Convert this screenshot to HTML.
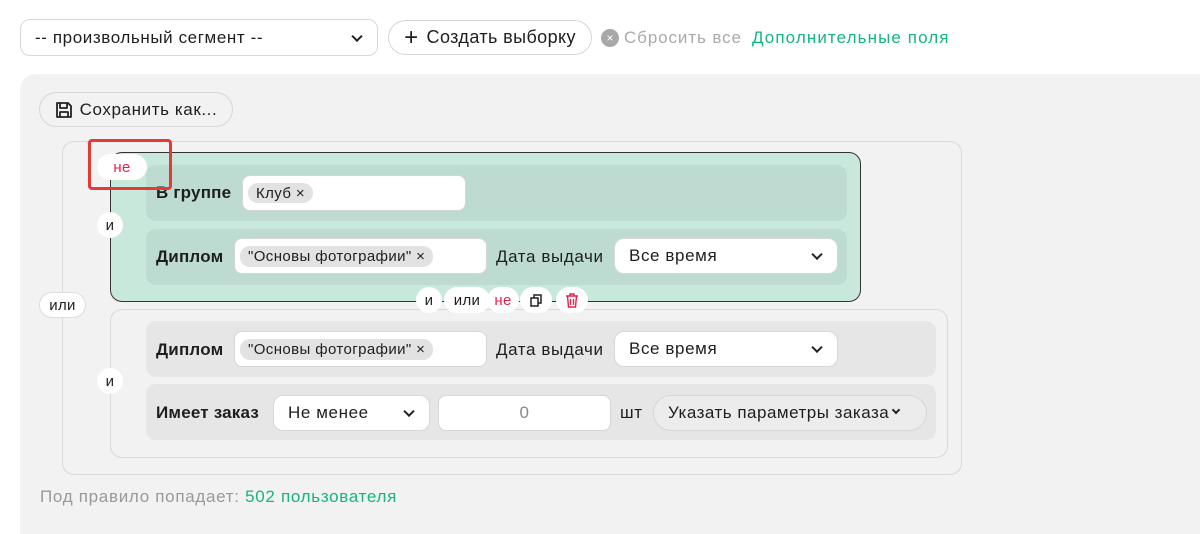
<!DOCTYPE html><html><head><meta charset="utf-8"><style>
*{box-sizing:border-box;margin:0;padding:0}
body{width:1200px;height:520px;background:#fff;font-family:"Liberation Sans",sans-serif;color:#1e1e1e;position:relative;overflow:hidden;font-size:17px;letter-spacing:.6px}
.a{position:absolute;white-space:nowrap}
.sel{background:#fff;border:1px solid #d8d8d8;border-radius:10px;display:flex;align-items:center;padding-left:14px}
.chev{position:absolute;right:16px;top:50%;width:8px;height:8px;border-right:2px solid #222;border-bottom:2px solid #222;transform:translateY(-70%) rotate(45deg)}
.pill{background:#fff;border:1px solid #d6d6d6;border-radius:20px;display:flex;align-items:center;justify-content:center}
.row{border-radius:10px}
.lbl{font-weight:bold;font-size:17px;letter-spacing:.2px}
.inp{background:#fff;border:1px solid #d6d6d6;border-radius:8px}
.chip{background:#e2e2e2;border-radius:10px;font-size:15px;display:flex;align-items:center;padding:0 8px;letter-spacing:.4px}
.sm{background:#fff;border-radius:14px;display:flex;align-items:center;justify-content:center;font-size:15px;letter-spacing:.3px}
</style></head><body>
<div class="a sel" style="left:20px;top:19px;width:358px;height:37px">-- произвольный сегмент --<span class="chev"></span></div>
<div class="a pill" style="left:388px;top:20px;width:204px;height:35px;font-size:18px;letter-spacing:.4px"><span style="font-size:24px;margin-right:8px;line-height:1">+</span>Создать выборку</div>
<div class="a" style="left:601px;top:29px;width:18px;height:18px;border-radius:50%;background:#a8a8a8;color:#fff;font-size:12px;text-align:center;line-height:18px;letter-spacing:0">×</div>
<div class="a" style="left:624px;top:28px;color:#aaa;font-size:17px;letter-spacing:.9px">Сбросить все</div>
<div class="a" style="left:752px;top:28px;color:#14b57f;font-size:17px;letter-spacing:1.1px">Дополнительные поля</div>
<div class="a" style="left:20px;top:74px;width:1200px;height:460px;background:#f2f2f2;border-radius:16px 0 0 0"></div>
<div class="a pill" style="left:39px;top:92px;width:194px;height:35px;background:#f2f2f2;font-size:17px"><svg width="18" height="18" viewBox="0 0 18 18" style="margin-right:7px"><path d="M2 2h11l3 3v11H2z M5 2v5h7V2 M5 16v-5h8v5" fill="none" stroke="#222" stroke-width="1.8" stroke-linejoin="round"/></svg>Сохранить как...</div>
<div class="a" style="left:62px;top:141px;width:900px;height:334px;border:1px solid #d9d9d9;border-radius:12px"></div>
<div class="a" style="left:110px;top:152px;width:751px;height:150px;background:#c8e8dc;border:1.5px solid #333;border-radius:12px"></div>
<div class="a row" style="left:146px;top:165px;width:701px;height:56px;background:#bddbd0"></div>
<div class="a lbl" style="left:156px;top:183px">В группе</div>
<div class="a inp" style="left:242px;top:175px;width:224px;height:36px"></div>
<div class="a chip" style="left:248px;top:183px;height:20px">Клуб ×</div>
<div class="a row" style="left:146px;top:229px;width:701px;height:56px;background:#bddbd0"></div>
<div class="a lbl" style="left:156px;top:247px">Диплом</div>
<div class="a inp" style="left:234px;top:238px;width:253px;height:36px"></div>
<div class="a chip" style="left:240px;top:246px;height:21px">"Основы фотографии" ×</div>
<div class="a" style="left:496px;top:247px">Дата выдачи</div>
<div class="a sel" style="left:614px;top:238px;width:224px;height:36px">Все время<span class="chev"></span></div>
<div class="a" style="left:110px;top:309px;width:838px;height:149px;border:1px solid #d9d9d9;border-radius:12px"></div>
<div class="a row" style="left:146px;top:321px;width:790px;height:56px;background:#e6e6e6"></div>
<div class="a lbl" style="left:156px;top:340px">Диплом</div>
<div class="a inp" style="left:234px;top:331px;width:253px;height:36px"></div>
<div class="a chip" style="left:240px;top:339px;height:21px">"Основы фотографии" ×</div>
<div class="a" style="left:496px;top:340px">Дата выдачи</div>
<div class="a sel" style="left:614px;top:331px;width:224px;height:36px">Все время<span class="chev"></span></div>
<div class="a row" style="left:146px;top:384px;width:790px;height:56px;background:#e6e6e6"></div>
<div class="a lbl" style="left:156px;top:403px">Имеет заказ</div>
<div class="a sel" style="left:273px;top:395px;width:157px;height:36px">Не менее<span class="chev"></span></div>
<div class="a inp" style="left:438px;top:395px;width:173px;height:36px;text-align:center;line-height:34px;color:#888">0</div>
<div class="a" style="left:620px;top:403px">шт</div>
<div class="a pill" style="left:653px;top:395px;width:274px;height:36px;background:#ececec;justify-content:flex-start;padding-left:14px;letter-spacing:.5px">Указать параметры заказа<span style="margin-left:4px;width:6px;height:6px;border-right:2px solid #222;border-bottom:2px solid #222;transform:translateY(-3px) rotate(45deg)"></span></div>
<div class="a sm" style="left:97px;top:154px;width:50px;height:26px;color:#e8204e">не</div>
<div class="a sm" style="left:97px;top:212px;width:26px;height:26px">и</div>
<div class="a sm" style="left:97px;top:368px;width:26px;height:26px">и</div>
<div class="a sm" style="left:39px;top:292px;width:47px;height:26px;border:1px solid #ddd">или</div>
<div class="a sm" style="left:416px;top:287px;width:26px;height:26px">и</div>
<div class="a sm" style="left:444px;top:287px;width:46px;height:26px">или</div>
<div class="a sm" style="left:487px;top:287px;width:32px;height:26px;color:#e8204e">не</div>
<div class="a sm" style="left:520px;top:287px;width:32px;height:26px"><svg width="14" height="14" viewBox="0 0 14 14"><path d="M2 5h7v8H2z M5 5V2h7v8H9" fill="none" stroke="#222" stroke-width="1.5"/></svg></div>
<div class="a sm" style="left:556px;top:287px;width:32px;height:26px"><svg width="14" height="15" viewBox="0 0 14 15"><path d="M1 3h12 M5 3V1h4v2 M2.5 3l1 11h7l1-11 M5.5 6v6 M8.5 6v6" fill="none" stroke="#e8204e" stroke-width="1.4"/></svg></div>
<div class="a" style="left:88px;top:139px;width:84px;height:51px;border:3px solid #e53935;border-radius:4px"></div>
<div class="a" style="left:40px;top:487px;font-size:17px;letter-spacing:.7px;color:#999">Под правило попадает: <span style="color:#14b57f">502 пользователя</span></div>
</body></html>
